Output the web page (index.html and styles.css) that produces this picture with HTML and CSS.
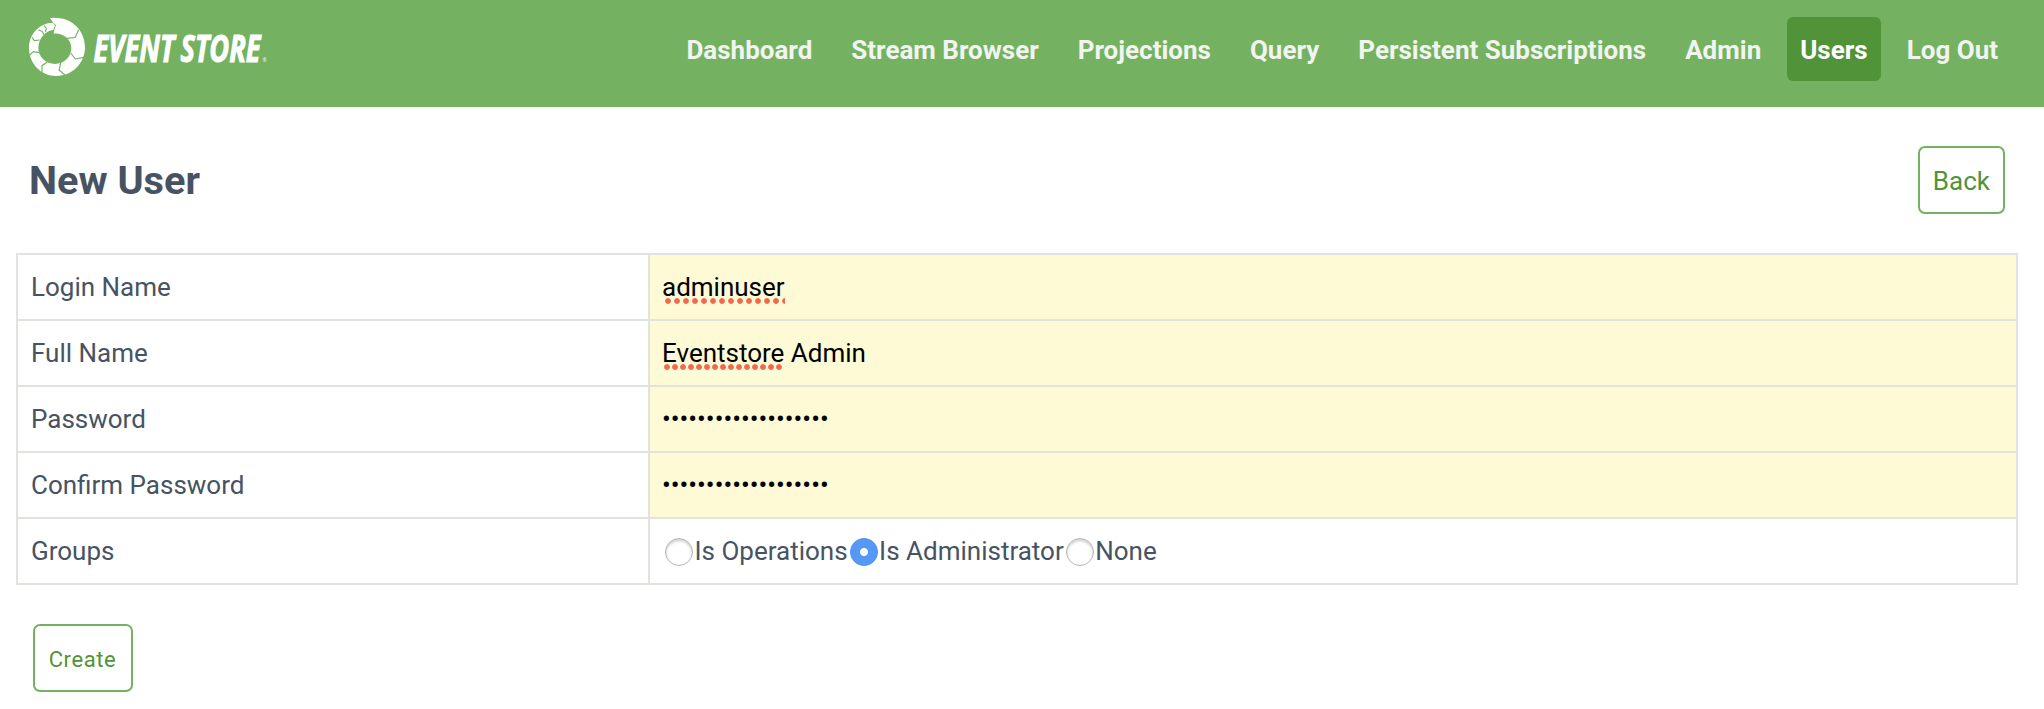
FILE: index.html
```html
<!DOCTYPE html>
<html lang="en">
<head>
<meta charset="utf-8">
<title>Event Store - New User</title>
<link rel="stylesheet" href="styles.css">
</head>
<body>
<header class="header">
  <svg class="logo" viewBox="0 0 260 80" role="img" aria-label="Event Store">
    <g transform="scale(.33333)">
      <path class="ring" d="M90 24Q100 23 112 24C158 25 195 64 195 112C195 160 157 198 109 198C62 198 27 160 27 114C27 72 58 39 98 38Q103 42 105 47Q101 53 100 60C76 62 55 86 55 115C55 141 78 162 105 162C132 162 154 141 154 115C154 89 130 68 101 71Q102 58 108 46Q97 36 90 24Z"/>
      <path class="cuts" d="M176 59L166 82L138 86M192 142L166 147L152 129M135 195L117 180L122 159M66 187L66 167L82 156M29 135L40 125L58 128M36 82L43 92L59 90M55 60L66 64L72 74M72 47L79 55L76 66"/>
    </g>
    <text class="wordmark" x="73.5" y="51.5" textLength="81" lengthAdjust="spacingAndGlyphs">EVENT</text>
    <text class="wordmark" x="160.5" y="51.5" textLength="80" lengthAdjust="spacingAndGlyphs">STORE</text>
    <text class="reg" x="242.5" y="52">®</text>
  </svg>
  <nav class="nav">
    <a class="nav-link">Dashboard</a>
    <a class="nav-link">Stream Browser</a>
    <a class="nav-link">Projections</a>
    <a class="nav-link">Query</a>
    <a class="nav-link">Persistent Subscriptions</a>
    <a class="nav-link">Admin</a>
    <a class="nav-link active">Users</a>
    <a class="nav-link">Log Out</a>
  </nav>
</header>
<main>
  <div class="page-head">
    <h1 class="title">New User</h1>
    <a class="button">Back</a>
  </div>
  <table class="form">
    <tr><td class="label">Login Name</td><td class="filled"><span class="misspelt">adminuser</span></td></tr>
    <tr><td class="label">Full Name</td><td class="filled"><span class="misspelt tight">Eventstore</span> Admin</td></tr>
    <tr><td class="label">Password</td><td class="filled"><span class="secret">•••••••••••••••••••</span></td></tr>
    <tr><td class="label">Confirm Password</td><td class="filled"><span class="secret">•••••••••••••••••••</span></td></tr>
    <tr><td class="label">Groups</td><td>
      <div class="choices">
        <i class="radio"></i><span class="choice">Is Operations</span>
        <i class="radio checked"></i><span class="choice">Is Administrator</span>
        <i class="radio"></i><span class="choice">None</span>
      </div>
    </td></tr>
  </table>
  <button class="button create">Create</button>
</main>
</body>
</html>
```
FILE: styles.css
```css
* { box-sizing: border-box; }
body {
  margin: 0;
  background: #fff;
  color: #475363;
  font: 26px/40px Roboto, sans-serif;
}
.header {
  display: flex;
  justify-content: space-between;
  align-items: flex-start;
  height: 107px;
  padding: 10px 33px 0 20px;
  background: #74b261;
}
.logo { width: 260px; height: 80px; overflow: visible; }
.ring { fill: #fff; }
.cuts { fill: none; stroke: #74b261; stroke-width: 3.4; }
.wordmark {
  font: italic 700 38px "Open Sans", sans-serif;
  fill: #fff;
  stroke: #fff;
  stroke-width: 1.1;
}
.reg { font: 5px "Open Sans", sans-serif; fill: #fff; }
.nav { display: flex; gap: 13px; padding-top: 7px; }
.nav-link {
  height: 64px;
  padding: 13px 13px 0;
  border-radius: 6px;
  color: #f2f4f0;
  font-weight: 700;
  white-space: nowrap;
}
.nav-link.active { background: #509338; color: #fff; }
.page-head {
  display: flex;
  justify-content: space-between;
  align-items: center;
  height: 146px;
  padding: 0 39px 0 29px;
}
.title { margin: 0; padding-top: 2px; font-size: 39.7px; font-weight: 700; }
.button {
  display: block;
  height: 68px;
  padding: 13px;
  border: 2px solid #74b261;
  border-radius: 7px;
  background: #fff;
  color: #509338;
}
.form {
  width: 2002px;
  margin: 0 0 0 16px;
  border-collapse: collapse;
  table-layout: fixed;
}
.form td {
  height: 66px;
  padding: 0 13px;
  border: 2px solid #e1e3df;
}
.form .label { width: 632px; }
.form .filled { padding-left: 12px; background: #fdfad5; color: #000; }
.misspelt {
  padding-bottom: 2px;
  background: radial-gradient(circle at 5px 3px, #f0694c 2.4px, #f0694c00 3.3px) 1px 100% / 9px 6px repeat-x;
}
.misspelt.tight {
  background: radial-gradient(circle at 4px 3px, #f0694c 2.4px, #f0694c00 3.3px) 1px 100% / 8px 6px no-repeat;
  background-repeat: repeat-x;
}
.secret { letter-spacing: 0; }
.choices { display: flex; align-items: center; }
.radio {
  flex: none;
  width: 28px;
  height: 28px;
  margin: 1px 1.5px 0 2px;
  border: 1px solid #b5b5b5;
  border-radius: 50%;
  background: #fff;
  box-shadow: inset 0 2px 3px #0003;
}
.radio.checked {
  border-color: #4c92f2;
  background: radial-gradient(circle, #fff 3.6px, #5599f5 4.4px);
  box-shadow: none;
}
.create {
  width: 100px;
  margin: 39px 0 0 33px;
  padding: 2px 1px 0 0;
  font: 22px Roboto, sans-serif;
  letter-spacing: .6px;
}
```
